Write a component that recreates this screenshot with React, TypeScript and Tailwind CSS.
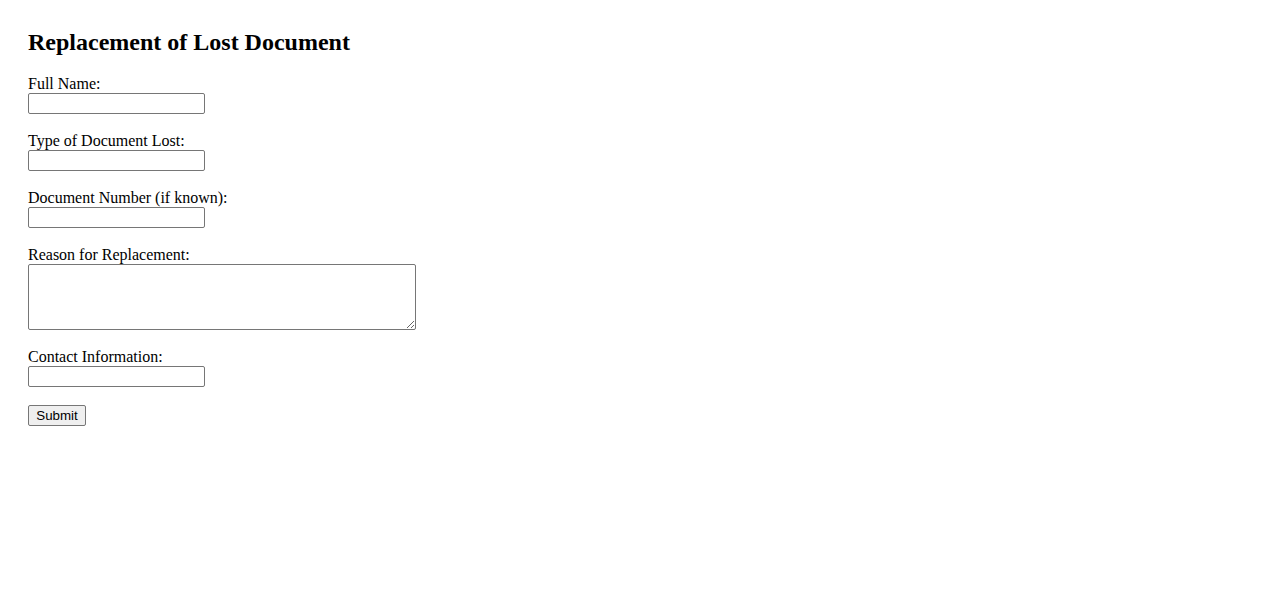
import React, { useState } from 'react';

type Field = {
  name: string;
  label: string;
  multiline?: boolean;
};

const fields: Field[] = [
  { name: 'fullName', label: 'Full Name:' },
  { name: 'docType', label: 'Type of Document Lost:' },
  { name: 'docNumber', label: 'Document Number (if known):' },
  { name: 'reason', label: 'Reason for Replacement:', multiline: true },
  { name: 'contact', label: 'Contact Information:' },
];

export default function App() {
  const [form, setForm] = useState<Record<string, string>>({});

  const handleChange = (
    e: React.ChangeEvent<HTMLInputElement | HTMLTextAreaElement>
  ) => {
    const { name, value } = e.target;
    setForm(f => ({ ...f, [name]: value }));
  };

  return (
    <div className="min-h-[601px] bg-white text-black p-[28px] font-['Times_New_Roman','Liberation_Serif',serif] text-[16px] leading-[18px]">
      <h2 className="text-[24px] leading-[28px] font-bold mb-[19px]">
        Replacement of Lost Document
      </h2>
      <form onSubmit={e => e.preventDefault()} className="flex flex-col items-start">
        {fields.map(f => (
          <div key={f.name} className="flex flex-col items-start mb-[18px]">
            <label htmlFor={f.name} className="block h-[18px]">
              {f.label}
            </label>
            {f.multiline ? (
              <textarea
                id={f.name}
                name={f.name}
                value={form[f.name] || ''}
                onChange={handleChange}
                className="block w-[388px] h-[66px] border border-[#767676] rounded-[2px] bg-white px-[2px] py-[1px] font-['Liberation_Mono',monospace] text-[13.33px] resize-y"
              />
            ) : (
              <input
                id={f.name}
                name={f.name}
                value={form[f.name] || ''}
                onChange={handleChange}
                className="block w-[177px] h-[21px] border border-[#767676] rounded-[2px] bg-white px-[2px] py-[1px] font-['Arial','Liberation_Sans',sans-serif] text-[13.33px]"
              />
            )}
          </div>
        ))}
        <button
          type="submit"
          className="w-[58px] h-[21px] flex items-center justify-center border border-[#767676] rounded-[2px] bg-[#efefef] text-black font-['Arial','Liberation_Sans',sans-serif] text-[13.33px] leading-none"
        >
          Submit
        </button>
      </form>
    </div>
  );
}
